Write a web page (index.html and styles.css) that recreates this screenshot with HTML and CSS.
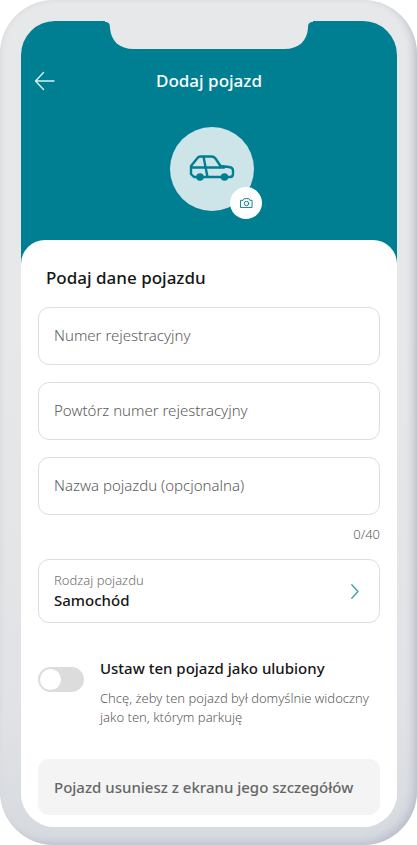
FILE: index.html
```html
<!DOCTYPE html>
<html lang="pl">
<head>
<meta charset="utf-8">
<meta name="viewport" content="width=device-width, initial-scale=1">
<title>Dodaj pojazd</title>
<link rel="stylesheet" href="styles.css">
</head>
<body>
<div class="phone">
  <div class="screen">
    <svg class="notch" viewBox="0 0 208 29" aria-hidden="true"><path d="M0 0H208V1C204 1 203 3 203 7C202 20 194 28 179 28H29C14 28 6 20 5 7C5 3 4 1 0 1Z"/></svg>
    <header class="header">
      <div class="bar">
        <button class="back" type="button" aria-label="Wstecz">
          <svg viewBox="0 0 22 20"><path d="M20 10H1.500M9.500 1.500L1.500 10L9.500 18.500"/></svg>
        </button>
        <h1 class="title">Dodaj pojazd</h1>
      </div>
      <div class="avatar">
        <svg class="car" viewBox="0 0 46 28"><path d="M7 22H5L2 19V11L8.500 3Q9.500 1.500 11.500 1.500H22.500Q25 1.500 26.500 3.500L31.500 11L40 12Q44 12.600 44 15.500V19Q44 22 41 22H7M2 12.500H35M14.500 1.500L16.500 12L18.500 22"/><circle class="wheel" cx="11" cy="22" r="3.800"/><circle class="wheel" cx="35.500" cy="22" r="3.800"/></svg>
        <button class="photo" type="button" aria-label="Dodaj zdjęcie">
          <svg viewBox="0 0 14 11"><path d="M1 2.500H3.300L4.500 .7H9.500L10.700 2.500H13V10.300H1Z"/><circle cx="7" cy="5.900" r="2.400"/></svg>
        </button>
      </div>
    </header>
    <main class="sheet">
      <h2 class="heading">Podaj dane pojazdu</h2>
      <form class="form">
        <input class="field" type="text" placeholder="Numer rejestracyjny" aria-label="Numer rejestracyjny">
        <input class="field" type="text" placeholder="Powtórz numer rejestracyjny" aria-label="Powtórz numer rejestracyjny">
        <input class="field" type="text" maxlength="40" placeholder="Nazwa pojazdu (opcjonalna)" aria-label="Nazwa pojazdu (opcjonalna)">
        <p class="counter">0/40</p>
        <div class="kind">
          <label class="kind-label" for="kind">Rodzaj pojazdu</label>
          <select class="kind-select" id="kind"><option>Samochód</option></select>
          <svg class="chevron" viewBox="0 0 8 15" aria-hidden="true"><path d="M.8 .8L7 7.500L.8 14.200"/></svg>
        </div>
        <div class="favourite">
          <input class="switch" type="checkbox" id="favourite" aria-describedby="favourite-hint">
          <div class="favourite-text">
            <label class="favourite-label" for="favourite">Ustaw ten pojazd jako ulubiony</label>
            <p class="hint" id="favourite-hint">Chcę, żeby ten pojazd był domyślnie widoczny jako ten, którym parkuję</p>
          </div>
        </div>
        <p class="note">Pojazd usuniesz z ekranu jego szczegółów</p>
      </form>
    </main>
  </div>
</div>
</body>
</html>
```
FILE: styles.css
```css
* {
  box-sizing: border-box;
}

body {
  margin: 0;
  background: #fff;
  color: #161616;
  font-family: "Noto Sans", "Open Sans", sans-serif;
}

h1, h2, p {
  margin: 0;
}

button {
  border: 0;
  padding: 0;
  cursor: pointer;
}

svg {
  display: block;
  fill: none;
  stroke: #007e92;
  stroke-linecap: round;
  stroke-linejoin: round;
}

.phone {
  display: flex;
  min-height: 100vh;
  padding: 21px 20px 18px 21px;
  border-radius: 54px;
  background: linear-gradient(#e6e8e9 40%, #e0e2e5 85%, #d6d9df);
  box-shadow: inset -5px -4px 9px -2px #b9bdca, inset 2px 0 4px #dcdee0;
}

.screen {
  position: relative;
  display: flex;
  flex-direction: column;
  flex: 1;
  min-width: 0;
  overflow: hidden;
  border-radius: 34px;
  background: linear-gradient(#007e92 300px, #fff 300px);
}

.notch {
  position: absolute;
  top: 0;
  left: 50%;
  width: 208px;
  transform: translateX(-50%);
  fill: #e6e8e9;
  stroke: none;
}

.header {
  padding-top: 44px;
  color: #fff;
}

.bar {
  display: grid;
  grid-template-columns: 48px 1fr 48px;
  align-items: center;
  height: 32px;
}

.back {
  display: grid;
  place-items: center;
  height: 32px;
  background: none;
}

.back svg {
  width: 22px;
  stroke: #d5f2f4;
  stroke-width: 1.4;
}

.title {
  font-size: 17px;
  font-weight: 500;
  line-height: 24px;
  text-align: center;
}

.avatar {
  position: relative;
  display: grid;
  place-items: center;
  width: 84px;
  height: 84px;
  margin: 30px auto 29px;
  left: 3px;
  border-radius: 50%;
  background: #cde5e9;
}

.car {
  width: 46px;
  stroke-width: 2.4;
}

.wheel {
  fill: #007e92;
  stroke: none;
}

.photo {
  position: absolute;
  right: -8px;
  bottom: -8px;
  display: grid;
  place-items: center;
  width: 32px;
  height: 32px;
  border-radius: 50%;
  background: #fff;
}

.photo svg {
  width: 13px;
}

.sheet {
  flex: 1;
  padding: 24px 17px 12px;
  border-radius: 24px 24px 0 0;
  background: #fff;
}

.heading {
  margin: 0 8px 15px;
  font-size: 17px;
  font-weight: 500;
  line-height: 28px;
}

.form {
  display: flex;
  flex-direction: column;
}

.field {
  width: 100%;
  height: 58px;
  margin-bottom: 17px;
  padding: 0 15px 2px;
  border: 1px solid #dedede;
  border-radius: 11px;
  background: #fff;
  color: #161616;
  font: 300 15px/20px "Noto Sans", "Open Sans", sans-serif;
}

.field::placeholder {
  color: #5c5c5c;
  opacity: 1;
}

.counter {
  margin-top: -8px;
  color: #5c5c5c;
  font-size: 13px;
  font-weight: 300;
  line-height: 20px;
  text-align: right;
}

.kind {
  position: relative;
  height: 64px;
  margin-top: 15px;
}

.kind-label {
  position: absolute;
  top: 12px;
  left: 16px;
  color: #707070;
  font-size: 13px;
  font-weight: 300;
  line-height: 18px;
  pointer-events: none;
}

.kind-select {
  width: 100%;
  height: 100%;
  padding: 18px 40px 0 15px;
  border: 1px solid #dedede;
  border-radius: 11px;
  appearance: none;
  background: transparent;
  color: #161616;
  font: 500 15px/20px "Noto Sans", "Open Sans", sans-serif;
}

.chevron {
  position: absolute;
  top: 25px;
  right: 21px;
  width: 8px;
  stroke: #3a9fb0;
  stroke-width: 1.3;
  pointer-events: none;
}

.favourite {
  display: flex;
  gap: 16px;
  margin-top: 35px;
}

.switch {
  flex: none;
  width: 46px;
  height: 25px;
  margin: 9px 0 0;
  padding: 2px;
  border-radius: 13px;
  appearance: none;
  background: #dcdcdc;
}

.switch::before {
  content: "";
  display: block;
  width: 21px;
  height: 21px;
  border-radius: 50%;
  background: #fff;
}

.switch:checked {
  background: #007e92;
}

.switch:checked::before {
  margin-left: auto;
}

.favourite-label {
  display: block;
  font-size: 15px;
  font-weight: 500;
  line-height: 20px;
}

.hint {
  margin-top: 11px;
  color: #5c5c5c;
  font-size: 13px;
  font-weight: 300;
  line-height: 19px;
}

.note {
  margin-top: 32px;
  padding: 18px 16px;
  border-radius: 11px;
  background: #f4f4f4;
  color: #666;
  font-size: 15px;
  font-weight: 500;
  line-height: 20px;
}
```
